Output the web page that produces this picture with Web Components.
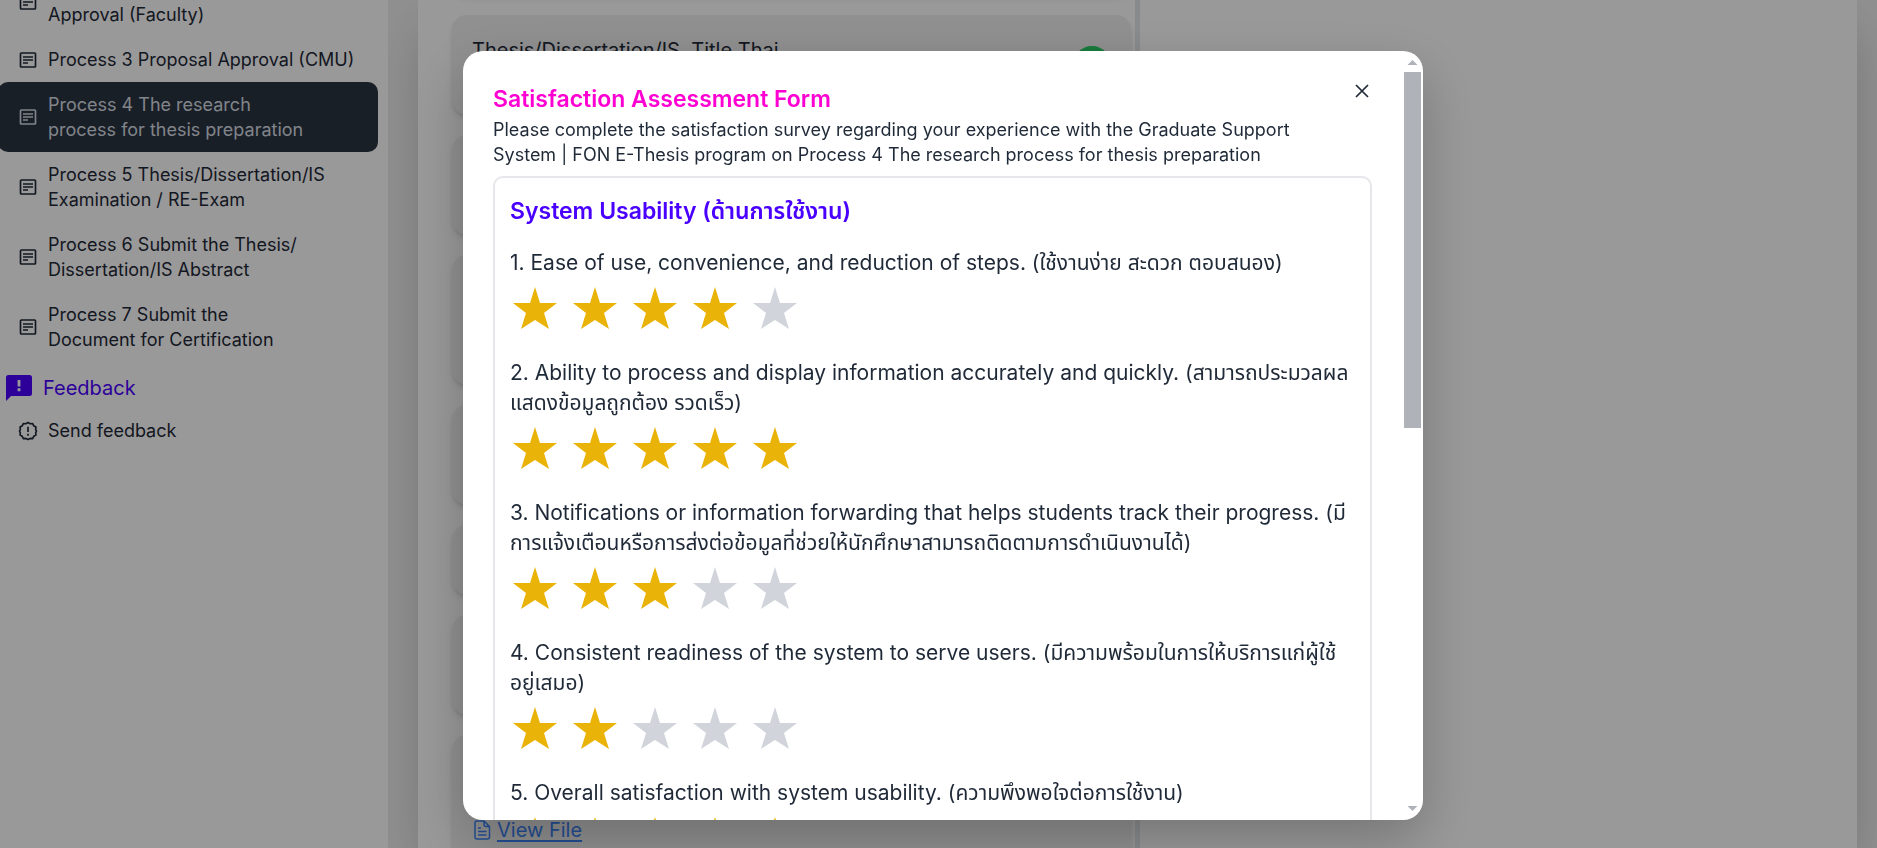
<!DOCTYPE html>
<html lang="en">
<head>
<meta charset="utf-8">
<title>FON E-Thesis</title>
<style>
  html, body { margin: 0; height: 100%; }
  body {
    font-family: Inter, "Noto Sans Thai", "Noto Sans", sans-serif;
    font-size: 18px;
    line-height: 25px;
    color: #1f2937;
    background: #fff;
    overflow: hidden;
  }
</style>
</head>
<body>
<app-shell>
  <side-bar slot="nav">
    <nav-item><br>Approval (Faculty)</nav-item>
    <nav-item>Process 3 Proposal Approval (CMU)</nav-item>
    <nav-item active>Process 4 The research<br>process for thesis preparation</nav-item>
    <nav-item>Process 5 Thesis/Dissertation/IS<br>Examination / RE-Exam</nav-item>
    <nav-item>Process 6 Submit the Thesis/<br>Dissertation/IS Abstract</nav-item>
    <nav-item>Process 7 Submit the<br>Document for Certification</nav-item>
    <nav-heading>Feedback</nav-heading>
    <nav-item icon="alert">Send feedback</nav-item>
  </side-bar>
  <step-list>
    <step-card size="first"></step-card>
    <step-card done>Thesis/Dissertation/IS. Title Thai</step-card>
    <step-card></step-card>
    <step-card size="tall"></step-card>
    <step-card></step-card>
    <step-card size="short"></step-card>
    <step-card></step-card>
    <step-card size="file"><file-link>View File</file-link></step-card>
  </step-list>
</app-shell>
<survey-modal>
  <span slot="title">Satisfaction Assessment Form</span>
  <span slot="intro">Please complete the satisfaction survey regarding your experience with the Graduate Support<br>System | FON E-Thesis program on Process 4 The research process for thesis preparation</span>
  <survey-section>
    <span slot="title">System Usability (ด้านการใช้งาน)</span>
    <star-question name="q1" value="4">1. Ease of use, convenience, and reduction of steps. (ใช้งานง่าย สะดวก ตอบสนอง)</star-question>
    <star-question name="q2" value="5">2. Ability to process and display information accurately and quickly. (สามารถประมวลผล<br>แสดงข้อมูลถูกต้อง รวดเร็ว)</star-question>
    <star-question name="q3" value="3">3. Notifications or information forwarding that helps students track their progress. (มี<br>การแจ้งเตือนหรือการส่งต่อข้อมูลที่ช่วยให้นักศึกษาสามารถติดตามการดำเนินงานได้)</star-question>
    <star-question name="q4" value="2">4. Consistent readiness of the system to serve users. (มีความพร้อมในการให้บริการแก่ผู้ใช้<br>อยู่เสมอ)</star-question>
    <star-question name="q5" value="5">5. Overall satisfaction with system usability. (ความพึงพอใจต่อการใช้งาน)</star-question>
  </survey-section>
</survey-modal>

<script>
function define(name, html, setup) {
  const template = document.createElement('template');
  template.innerHTML = html;
  customElements.define(name, class extends HTMLElement {
    constructor() {
      super();
      this.attachShadow({ mode: 'open' }).append(template.content.cloneNode(true));
    }
    connectedCallback() { if (setup) setup(this, this.shadowRoot); }
  });
}

define('app-shell', `
<style>
  :host { display: flex; height: 100vh; overflow: hidden; background: #efefef; }
  ::slotted(side-bar) { flex: 0 0 388px; }
  main { flex: 1; margin: 0 20px 0 30px; display: flex; background: #fff; box-shadow: 0 25px 50px -12px rgba(0,0,0,.25); }
  .steps { flex: 0 0 717px; border-right: 5px solid #e5e7eb; }
</style>
<slot name="nav"></slot>
<main><div class="steps"><slot></slot></div></main>`);

define('side-bar', `
<style>
  :host { display: block; background: #fff; position: relative; z-index: 1; overflow: hidden; }
  nav { margin: -33px 10px 0 -2px; display: flex; flex-direction: column; }
</style>
<nav><slot></slot></nav>`);

define('nav-item', `
<style>
  :host { display: block; }
  a { display: flex; align-items: center; gap: 10px; padding: 10px 20px; border-radius: 10px; color: inherit; text-decoration: none; }
  svg { flex: none; width: 20px; height: 20px; fill: none; stroke: currentColor; stroke-width: 2; }
  :host([active]) a { background: #2b3440; color: #d7dde4; }
  .alert { display: none; }
  :host([icon=alert]) .alert { display: block; }
  :host([icon=alert]) .doc { display: none; }
</style>
<a href="#">
  <svg class="doc" viewBox="0 0 24 24"><rect x="3" y="3.6" width="18" height="16.8" rx="1"/><path d="M6 8.4h12M6 12h12M6 15.6h6"/></svg>
  <svg class="alert" viewBox="0 0 24 24"><path stroke-linejoin="round" d="M12 1.8l2.6 1.500 3-.2 1.3 2.7 2.6 1.500-.3 3 1 1.7-1 2.2.3 2.7-2.6 1.500-1.3 2.7-3-.2L12 22.2l-2.6-1.3-3 .2-1.3-2.7-2.6-1.500.3-2.7-1-2.2 1-1.7-.3-3 2.6-1.500 1.3-2.7 3 .2z"/><path d="M12 6.8v6.4M12 15.4v2.4"/></svg>
  <span><slot></slot></span>
</a>`);

define('nav-heading', `
<style>
  :host { display: flex; align-items: center; gap: 10px; padding: 11px 8px 5px 7px; line-height: 30px; font-size: 20px; color: #4a00ff; }
  svg { flex: none; width: 28px; height: 28px; fill: currentColor; }
</style>
<svg viewBox="0 0 28 28"><path fill-rule="evenodd" d="M3.500 1h21a2.500 2.500 0 0 1 2.500 2.500v16a2.500 2.500 0 0 1-2.500 2.500H6l-5 5V3.500A2.500 2.500 0 0 1 3.500 1zM12.600 6v6.500h2.800V6zM12.600 14.300v3h2.800v-3z"/></svg>
<span><slot></slot></span>`);

define('step-list', `
<style>
  :host { display: flex; flex-direction: column; gap: 20px; margin-top: -105px; padding: 0 4px 0 34px; }
</style>
<slot></slot>`);

define('step-card', `
<style>
  :host { display: flex; justify-content: space-between; align-items: flex-start; box-sizing: border-box; min-height: 100px; padding: 20px; border-radius: 15px; background: #f0f0f0; box-shadow: 0 4px 6px -1px rgba(0,0,0,.12), 0 2px 4px -2px rgba(0,0,0,.12); font-size: 20px; line-height: 30px; }
  :host([size=tall]) { min-height: 130px; }
  :host([size=short]) { min-height: 70px; }
  :host([size=file]) { min-height: 140px; padding-top: 80px; }
  svg { display: none; width: 38px; height: 38px; align-self: center; }
  :host([done]) svg { display: block; }
</style>
<span><slot></slot></span>
<svg viewBox="0 0 38 38"><circle cx="19" cy="19" r="19" fill="#28cc65"/><path d="M11 19l6 6 11-12" fill="none" stroke="#fff" stroke-width="3"/></svg>`);

define('file-link', `
<style>
  :host { display: inline-flex; }
  a { display: inline-flex; align-items: center; gap: 5px; color: #3b82f6; text-underline-offset: 3px; text-decoration-thickness: 2px; }
  svg { flex: none; width: 20px; height: 20px; fill: none; stroke: currentColor; stroke-width: 1.500; stroke-linejoin: round; }
</style>
<a href="#"><svg viewBox="0 0 20 20"><path d="M12 1H5a2 2 0 0 0-2 2v14a2 2 0 0 0 2 2h10.500a2 2 0 0 0 2-2V6.500zM12 1v3.500a2 2 0 0 0 2 2h3.500M6 8h3M6 11.500h8.500M6 15h8.500"/></svg><slot></slot></a>`);

define('survey-modal', `
<style>
  :host { position: fixed; z-index: 10; inset: 0; display: grid; justify-items: center; padding: 51px 0 28px 9px; background: rgba(0,0,0,.4); }
  section { position: relative; display: flex; min-height: 0; overflow: hidden; border-radius: 20px; background: #fff; }
  .lift { display: grid; width: 100%; max-width: 960px; min-height: 0; border-radius: 20px; box-shadow: 0 20px 55px -2px rgba(0,0,0,.25); }
  .body { flex: 1; min-width: 0; padding: 30px; }
  h2 { margin: 0; font-size: 23px; line-height: 36px; font-weight: 600; color: #ff00d3; }
  p { margin: 0 0 9px; white-space: nowrap; }
  button { position: absolute; top: 20px; right: 41px; width: 40px; height: 40px; padding: 0; border: 0; border-radius: 20px; background: none; color: inherit; }
  button svg { display: block; width: 14px; height: 14px; margin: auto; fill: none; stroke: currentColor; stroke-width: 1.700; }
  .bar { flex: 0 0 17px; margin: 0 2px; display: flex; flex-direction: column; align-items: center; }
  .bar svg { flex: 0 0 21px; width: 17px; fill: #afb2b8; }
  .track { flex: 1; width: 17px; }
  .thumb { height: 49%; background: #afb2b8; }
</style>
<div class="lift">
<section role="dialog" aria-label="Survey">
  <div class="body">
    <h2><slot name="title"></slot></h2>
    <p><slot name="intro"></slot></p>
    <slot></slot>
  </div>
  <div class="bar">
    <svg viewBox="0 0 17 21"><path d="M8.500 9l5 5h-10z"/></svg>
    <div class="track"><div class="thumb"></div></div>
    <svg viewBox="0 0 17 21"><path d="M8.500 12l5-5h-10z"/></svg>
  </div>
  <button type="button" aria-label="Close"><svg viewBox="0 0 14 14"><path d="M1 1l12 12M13 1L1 13"/></svg></button>
</section>
</div>`);

define('survey-section', `
<style>
  :host { display: block; padding: 15px; border: 2px solid #e5e7eb; border-radius: 10px; }
  h3 { margin: 0 0 19px; font-size: 23px; line-height: 36px; font-weight: 600; color: #4a00ff; }
</style>
<h3><slot name="title"></slot></h3>
<slot></slot>`);

define('star-question', `
<style>
  :host { display: block; margin-bottom: 30px; font-size: 21px; line-height: 30px; }
  fieldset { margin: 0; padding: 0; border: 0; min-width: 0; }
  legend { padding: 0; white-space: nowrap; }
  .stars { display: flex; gap: 10px; margin-top: 4px; height: 46px; }
  input { appearance: none; margin: 0; width: 50px; height: 50px; background: #d1d5db;
    clip-path: polygon(25px 5px, 30px 21px, 47px 21px, 34px 31px, 39px 47px, 25px 38px, 11px 47px, 16px 31px, 3px 21px, 20px 21px); }
  input.on { background: #eab308; }
</style>
<fieldset>
  <legend><slot></slot></legend>
  <div class="stars"></div>
</fieldset>`, (host, root) => {
  const stars = root.querySelector('.stars');
  const value = Number(host.getAttribute('value'));
  for (let i = 1; i <= 5; i++) {
    const input = document.createElement('input');
    input.type = 'radio';
    input.name = host.getAttribute('name');
    input.value = i;
    input.checked = i === value;
    input.setAttribute('aria-label', i + ' of 5');
    input.classList.toggle('on', i <= value);
    input.addEventListener('change', () => {
      stars.querySelectorAll('input').forEach((el, n) => el.classList.toggle('on', n < i));
    });
    stars.append(input);
  }
});
</script>
</body>
</html>
